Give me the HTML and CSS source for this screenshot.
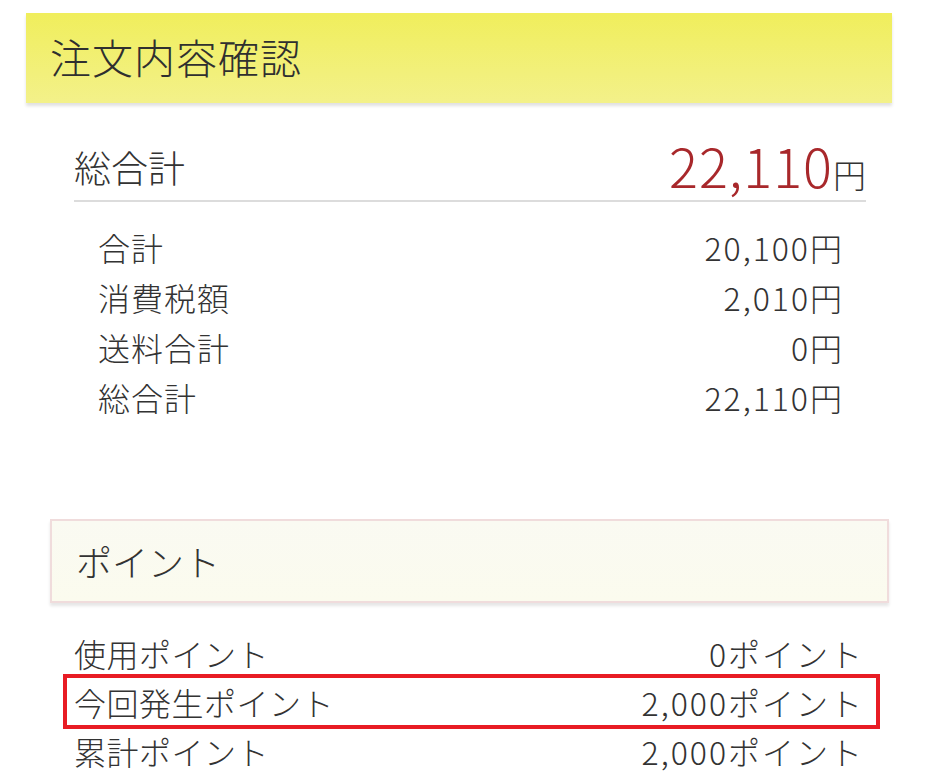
FILE: index.html
```html
<!DOCTYPE html>
<html lang="ja">
<head>
<meta charset="utf-8">
<link rel="stylesheet" href="styles.css">
</head>
<body>
<div class="page">
  <div class="header"><h1 class="header-title">注文内容確認</h1></div>
  <div class="grand">
    <span class="grand-label">総合計</span>
    <span class="grand-value"><span class="grand-num">22,110</span><span class="grand-yen">円</span></span>
  </div>
  <div class="breakdown">
    <div class="brow"><span>合計</span><span class="val">20,100円</span></div>
    <div class="brow"><span>消費税額</span><span class="val">2,010円</span></div>
    <div class="brow"><span>送料合計</span><span class="val">0円</span></div>
    <div class="brow"><span>総合計</span><span class="val">22,110円</span></div>
  </div>
  <div class="point-box"><span class="point-title">ポイント</span></div>
  <div class="points">
    <div class="prow"><span>使用ポイント</span><span class="val">0ポイント</span></div>
    <div class="prow prow-hl"><span>今回発生ポイント</span><span class="val">2,000ポイント</span></div>
    <div class="prow"><span>累計ポイント</span><span class="val">2,000ポイント</span></div>
  </div>
</div>
</body>
</html>
```
FILE: styles.css
```css
html, body {
  margin: 0;
  padding: 0;
  background: #fff;
}
body {
  font-family: "Noto Sans CJK JP", "Noto Sans", sans-serif;
  color: #333;
  font-weight: 300;
}
.page {
  width: 941px;
  height: 779px;
  overflow: hidden;
  padding-top: 13px;
  box-sizing: border-box;
}
.header {
  margin: 0 49px 0 26px;
  height: 90px;
  background: linear-gradient(#f0ee5c, #f3f18a);
  box-shadow: 0 3px 3px rgba(0,0,0,0.12);
  display: flex;
  align-items: center;
  padding-left: 24px;
}
.header-title {
  margin: 0;
  font-size: 41px;
  font-weight: 300;
  color: #2f2f2f;
  letter-spacing: 1px;
  line-height: 1;
  transform: translateY(-2px);
}
.grand {
  margin: 22px 75px 0 74px;
  height: 67px;
  border-bottom: 2px solid #dcdcdc;
  display: flex;
  justify-content: space-between;
  align-items: flex-end;
  padding-bottom: 8px;
}
.grand-label {
  font-size: 37px;
  line-height: 1;
  padding-bottom: 6px;
}
.grand-value {
  display: flex;
  align-items: baseline;
}
.grand-num {
  font-size: 54px;
  color: #a8282b;
  line-height: 1;
  letter-spacing: 1px;
}
.grand-yen {
  font-size: 33px;
  line-height: 1;
}
.breakdown {
  margin: 20px 99px 0 98px;
}
.brow {
  display: flex;
  justify-content: space-between;
  height: 50px;
  align-items: center;
  font-size: 32px;
  letter-spacing: 1px;
}
.val {
  letter-spacing: 2px;
  margin-right: -2px;
}
.point-box {
  margin: 97px 52px 0 50px;
  height: 80px;
  border: 2px solid #f0dcdc;
  background: linear-gradient(#fafaf2, #fbfbee);
  box-shadow: 0 3px 3px rgba(0,0,0,0.1);
  display: flex;
  align-items: center;
  padding-left: 24px;
}
.point-title {
  font-size: 36px;
  line-height: 1;
}
.points {
  margin: 25px 61px 0 63px;
}
.prow {
  display: flex;
  justify-content: space-between;
  align-items: center;
  height: 41px;
  border: 4px solid transparent;
  padding: 0 14px 0 7px;
  font-size: 32px;
  letter-spacing: 0.5px;
}
.prow-hl {
  height: 47px;
  margin: -3px 0;
  border-color: #e81c24;
}
```
